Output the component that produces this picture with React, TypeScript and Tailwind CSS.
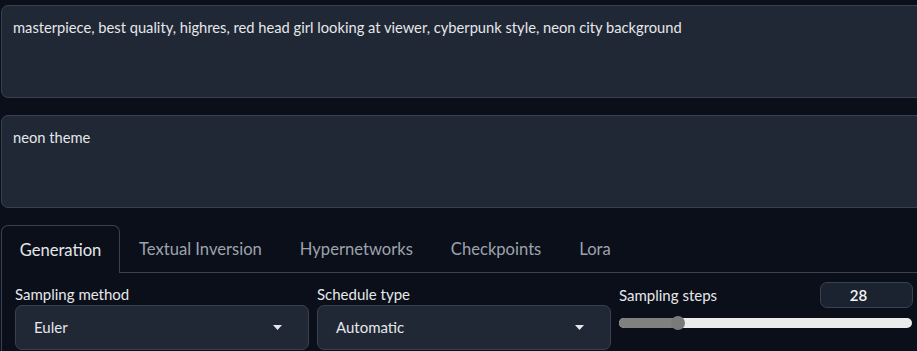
import React from "react";

const tabs = ["Generation", "Textual Inversion", "Hypernetworks", "Checkpoints", "Lora"];

function Caret() {
  return (
    <svg width="9" height="5" viewBox="0 0 9 5" className="shrink-0">
      <path d="M0 0 L9 0 L4.5 5 Z" fill="#e5e7eb" />
    </svg>
  );
}

function Dropdown({ label, value }: { label: string; value: string }) {
  return (
    <div className="flex flex-col gap-[1px] w-[294px]">
      <span className="text-[15px] leading-[20px] text-[#e5e7eb]">{label}</span>
      <div className="h-[45px] rounded-[7px] border border-[#374151] bg-[#212835] flex items-center justify-between pl-[18px] pr-[26px]">
        <span className="text-[15px] text-[#e5e7eb]">{value}</span>
        <Caret />
      </div>
    </div>
  );
}

export default function App() {
  const pct = 20;
  return (
    <div
      className="w-[917px] h-[351px] overflow-hidden bg-[#0b0f19] text-[#e5e7eb]"
      style={{ fontFamily: "Lato, 'Noto Sans', sans-serif" }}
    >
      <div className="w-[960px] pl-[1px] pt-[5px] flex flex-col">
        {/* prompts */}
        <div className="h-[93px] rounded-[7px] border border-[#374151] bg-[#212835] px-[11px] pt-[11px] text-[14.7px] leading-[20px]">
          masterpiece, best quality, highres, red head girl looking at viewer, cyberpunk style, neon city background
        </div>
        <div className="mt-[17px] h-[93px] rounded-[7px] border border-[#374151] bg-[#212835] px-[11px] pt-[11px] text-[14.7px] leading-[20px]">
          neon theme
        </div>

        {/* tabs */}
        <div className="mt-[17px] flex items-end h-[48px]">
          {tabs.map((t, i) =>
            i === 0 ? (
              <div
                key={t}
                className="h-[48px] w-[119px] pt-[1px] rounded-t-[7px] border border-b-0 border-[#374151] flex items-center justify-center text-[16.6px] text-[#e5e7eb]"
              >
                {t}
              </div>
            ) : (
              <div
                key={t}
                className="h-[48px] px-[19px] pt-[1px] flex items-center border-b border-[#374151] text-[16.6px] text-[#9ca3af]"
              >
                {t}
              </div>
            )
          )}
          <div className="flex-1 border-b border-[#374151]" />
        </div>

        {/* panel */}
        <div className="border-l border-[#374151] pl-[13px] pt-[11px] flex gap-[8px] h-[80px]">
          <Dropdown label="Sampling method" value="Euler" />
          <Dropdown label="Schedule type" value="Automatic" />
          <div className="w-[294px] flex flex-col">
            <div className="flex items-center justify-between">
              <span className="text-[15px] leading-[20px] text-[#e5e7eb] -mt-[2px]">Sampling steps</span>
              <div className="w-[93px] h-[26px] -mt-[2px] pr-[16px] rounded-[7px] border border-[#374151] bg-[#1b2230] flex items-center justify-center text-[15px] font-semibold text-[#f3f4f6]">
                28
              </div>
            </div>
            <div className="relative mt-[8px] h-[14px] w-[293px]">
              <div className="absolute left-0 right-0 top-[2px] h-[10px] rounded-full bg-[#ececec]" />
              <div
                className="absolute left-0 top-[2px] h-[10px] rounded-l-full bg-[#808080]"
                style={{ width: `${pct}%` }}
              />
              <div
                className="absolute top-0 h-[14px] w-[14px] -ml-[7px] rounded-full bg-[#7a7a7a]"
                style={{ left: `${pct}%` }}
              />
            </div>
          </div>
        </div>
      </div>
    </div>
  );
}
